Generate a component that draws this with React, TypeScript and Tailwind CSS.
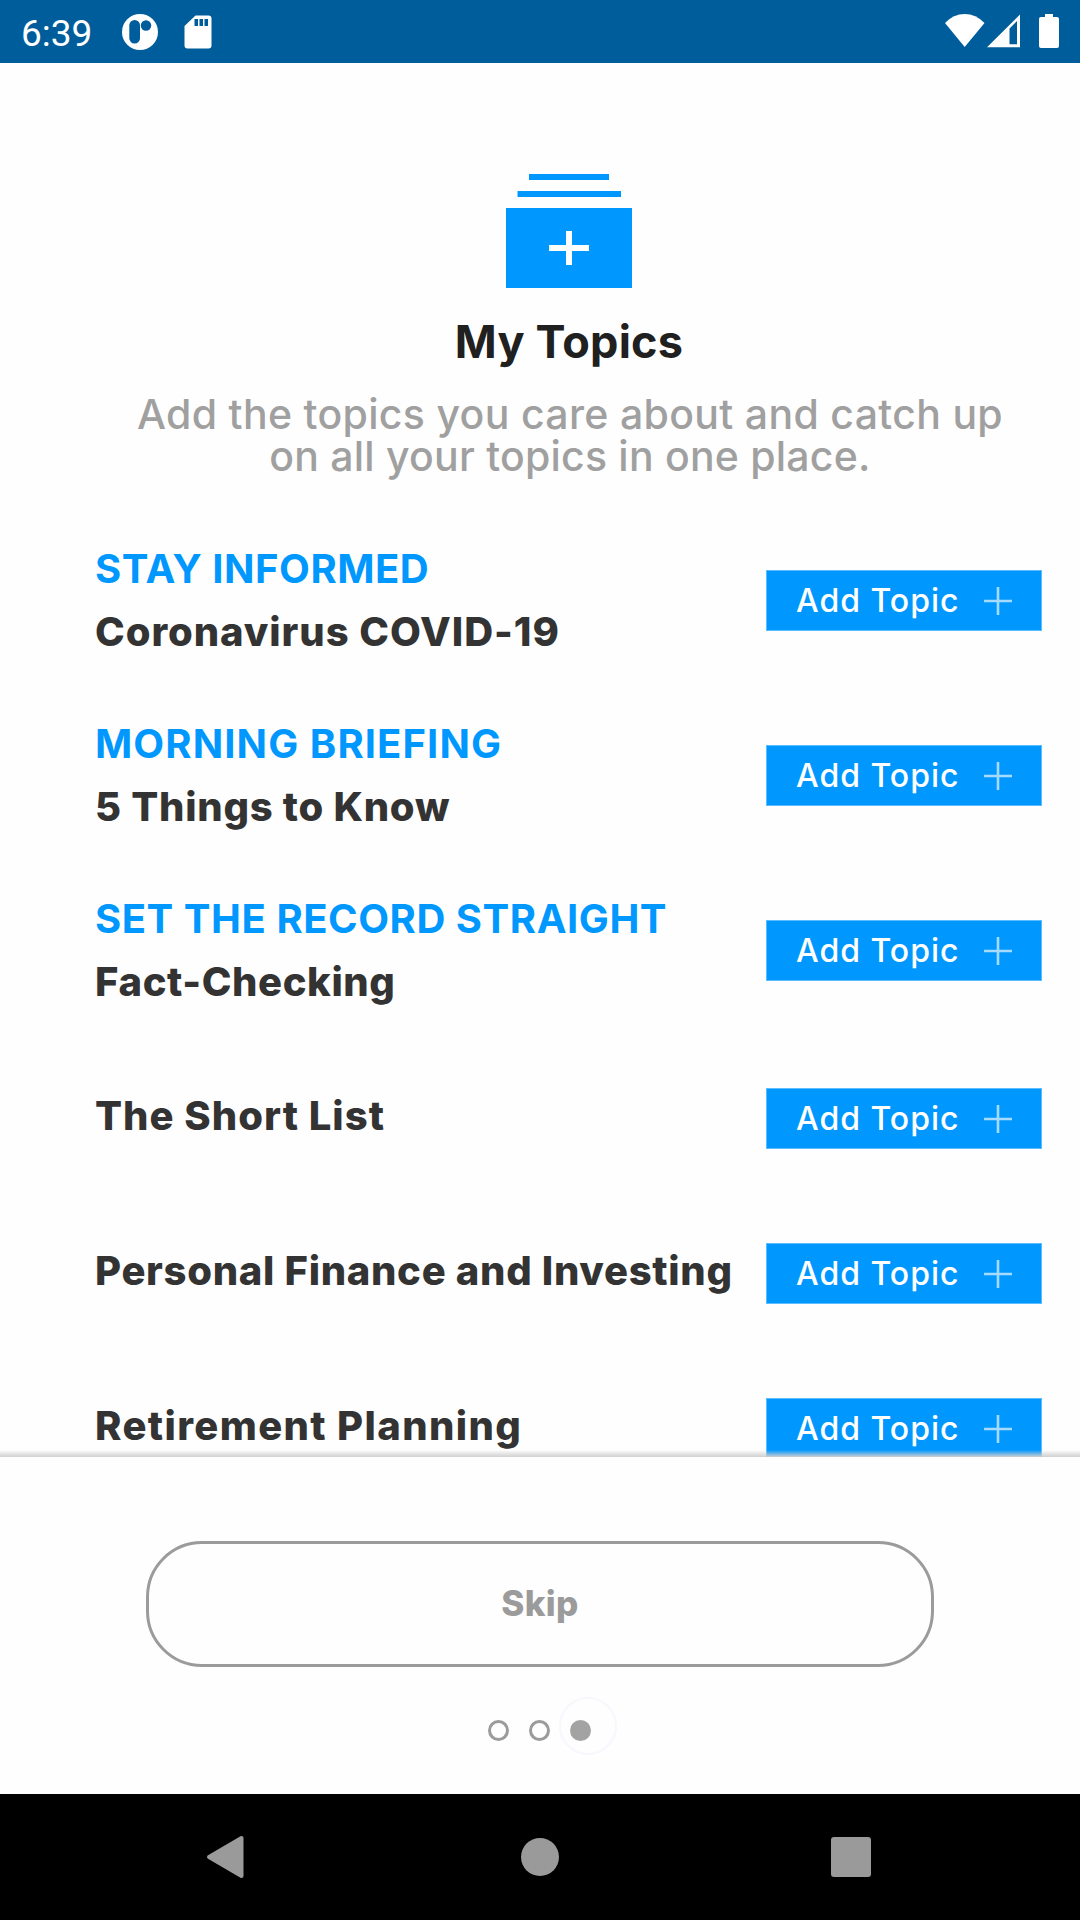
import React from "react";

type Topic = { tag?: string; tagClass?: string; title: string; titleClass: string; rowClass: string };

const topics: Topic[] = [
  { tag: "STAY INFORMED", tagClass: "tracking-[0.52px]", title: "Coronavirus COVID-19", titleClass: "tracking-[0.94px]", rowClass: "h-[175px]" },
  { tag: "MORNING BRIEFING", tagClass: "tracking-[1.1px]", title: "5 Things to Know", titleClass: "tracking-[0.73px]", rowClass: "h-[175px]" },
  { tag: "SET THE RECORD STRAIGHT", tagClass: "tracking-[0.55px]", title: "Fact-Checking", titleClass: "tracking-[0.6px]", rowClass: "h-[175px]" },
  { title: "The Short List", titleClass: "tracking-[1.02px]", rowClass: "mt-[3px] h-[155px]" },
  { title: "Personal Finance and Investing", titleClass: "tracking-[0.7px]", rowClass: "h-[155px]" },
  { title: "Retirement Planning", titleClass: "tracking-[1.38px]", rowClass: "h-[155px]" },
];

function StatusBar() {
  return (
    <header className="flex h-[63px] shrink-0 items-center bg-[#005d9b] pr-[21px] pl-[21px] text-white">
      <span className="w-[101px] pt-[3px] font-[Roboto,sans-serif] text-[37px] leading-none">6:39</span>
      <svg className="h-9 w-9" viewBox="0 0 36 36">
        <circle cx="18" cy="18" r="18" fill="#fff" />
        <rect x="7.3" y="6" width="10.7" height="23.5" rx="5.3" fill="#005d9b" />
        <circle cx="24" cy="11.5" r="5.2" fill="#005d9b" />
      </svg>
      <svg className="ml-[26px] h-[34px] w-[28px]" viewBox="0 0 28 34">
        <path d="M11.5 0.5H24.5Q27.5 .5 27.5 3.5V30.5Q27.5 33.5 24.5 33.5H3.5Q.5 33.5 .5 30.5V11Z" fill="#fff" />
        <path d="M10.5 4h3.5v7h-3.5zM15.5 4h3.5v7h-3.5zM20.5 4h3.5v7h-3.5z" fill="#005d9b" />
      </svg>
      <svg className="-mt-px ml-auto h-[34px] w-[40px]" viewBox="0 0 40 34">
        <path d="M0 9Q8.5 0 19.7 0T39.5 9L19.7 33Z" fill="#fff" />
      </svg>
      <svg className="-mt-px ml-0.5 h-[34px] w-[33px]" viewBox="0 0 33 34">
        <path fillRule="evenodd" d="M0 33.3H33V.5ZM22.5 14.5L30 7V30.3H22.5Z" fill="#fff" />
      </svg>
      <svg className="-mt-px ml-[19px] h-[34px] w-[20px]" viewBox="0 0 20 34">
        <path d="M6 0H14V3H18Q20 3 20 5V32Q20 34 18 34H2Q0 34 0 32V5Q0 3 2 3H6Z" fill="#fff" />
      </svg>
    </header>
  );
}

function AddButton() {
  return (
    <button className="mr-[38px] flex h-[61px] w-[276px] shrink-0 items-center border border-[#5bbcff] bg-[#0098ff] pl-[29px] text-white">
      <span className="w-[188px] text-left text-[32px] leading-[38px] font-medium tracking-[0.99px] whitespace-nowrap">Add Topic</span>
      <svg className="h-[28px] w-[28px]" viewBox="0 0 28 28">
        <path d="M14 0V28M0 14H28" stroke="#a6dbff" strokeWidth="2.6" />
      </svg>
    </button>
  );
}

function TopicRow({ topic }: { topic: Topic }) {
  return (
    <li className={`flex shrink-0 items-center justify-between ${topic.rowClass}`}>
      <div className="flex flex-col gap-[23px] whitespace-nowrap">
        {topic.tag && <span className={`text-[40px] leading-10 font-bold text-[#0098ff] ${topic.tagClass}`}>{topic.tag}</span>}
        <span className={`text-[40px] leading-10 font-extrabold text-[#333333] ${topic.tag ? "" : "-mt-[6px]"} ${topic.titleClass}`}>{topic.title}</span>
      </div>
      <AddButton />
    </li>
  );
}

export default function App() {
  return (
    <div className="flex h-[1920px] w-[1080px] flex-col overflow-hidden bg-[#fefefe] font-[Inter,sans-serif]">
      <StatusBar />
      <main className="relative flex h-[1394px] shrink-0 flex-col overflow-hidden">
        <section className="ml-[58px] flex h-[450px] shrink-0 flex-col items-center pt-[109px]">
          <svg className="h-[116px] w-[126px]" viewBox="0 0 126 116">
            <path d="M23 2H103V8H23ZM11.5 19H115V25H11.5ZM0 36H126V116H0Z" fill="#0098ff" />
            <path d="M43 73H60V59H66V73H83V79H66V93H60V79H43Z" fill="#fff" />
          </svg>
          <h1 className="mt-[32px] text-[45px] leading-[44px] font-bold tracking-[0.2px] text-[#202020]">My Topics</h1>
          <p className="mt-[29px] ml-0.5 text-center text-[41px] leading-[42px] font-[450] whitespace-nowrap text-[#a0a0a0]">
            <span className="block h-[42px] tracking-[0.32px]">Add the topics you care about and catch up</span>
            <span className="block h-[42px] tracking-[0.22px]">on all your topics in one place.</span>
          </p>
        </section>
        <ul className="flex flex-col pl-[95px]">
          {topics.map((topic) => (
            <TopicRow key={topic.title} topic={topic} />
          ))}
        </ul>
        <div className="absolute inset-x-0 bottom-0 h-[7px] bg-linear-to-b from-transparent to-[#cfcfcf]" />
      </main>
      <footer className="flex h-[337px] shrink-0 flex-col items-center bg-[#fefefe] pt-[84px]">
        <button className="flex h-[126px] w-[788px] items-center justify-center rounded-[56px] border-[3px] border-[#9b9b9b] pb-0.5 text-[35px] leading-none font-extrabold tracking-[0.4px] text-[#9b9b9b]">
          Skip
        </button>
        <div className="mt-[53px] mr-0.5 flex items-center gap-5">
          <span className="h-[21px] w-[21px] rounded-full border-[3px] border-[#9b9b9b]" />
          <span className="h-[21px] w-[21px] rounded-full border-[3px] border-[#9b9b9b]" />
          <span className="relative h-[21px] w-[21px] rounded-full bg-[#a3a3a3]">
            <span className="absolute -top-[23px] -left-[11px] h-[58px] w-[58px] rounded-full border-2 border-[#f7f7fd]" />
          </span>
        </div>
      </footer>
      <nav className="flex h-[126px] shrink-0 items-center justify-between bg-black pr-[209px] pl-[206px]">
        <svg className="h-[44px] w-[39px]" viewBox="0 0 39 44">
          <path d="M3 22L35.5 3V41Z" fill="#9a9a9a" stroke="#9a9a9a" strokeWidth="4" strokeLinejoin="round" />
        </svg>
        <span className="ml-[4px] h-[38px] w-[38px] rounded-full bg-[#9a9a9a]" />
        <span className="h-10 w-10 rounded-[3px] bg-[#9a9a9a]" />
      </nav>
    </div>
  );
}
